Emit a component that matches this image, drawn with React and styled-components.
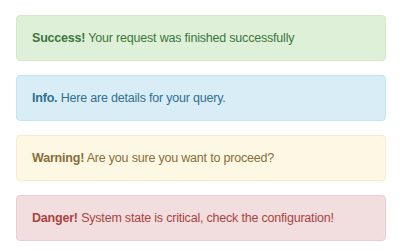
import React from "react";
import styled, { createGlobalStyle } from "styled-components";

const Global = createGlobalStyle`
  html, body { margin: 0; padding: 0; background: #fff; }
  body { font-family: "Liberation Sans", Arial, sans-serif; }
`;

const palette = {
  success: { bg: "#dff0d8", border: "#d6e9c6", color: "#3c763d" },
  info: { bg: "#d9edf7", border: "#bce8f1", color: "#31708f" },
  warning: { bg: "#fcf8e3", border: "#faebcc", color: "#8a6d3b" },
  danger: { bg: "#f2dede", border: "#ebccd1", color: "#a94442" },
};

const Stack = styled.div`
  display: flex;
  flex-direction: column;
  gap: 14px;
  width: 370px;
  padding: 15px 0 0 16px;
`;

const Alert = styled.div`
  box-sizing: border-box;
  height: 46px;
  padding: 12px 15px;
  border: 1px solid ${(p) => palette[p.$kind].border};
  border-radius: 4px;
  background: ${(p) => palette[p.$kind].bg};
  color: ${(p) => palette[p.$kind].color};
  font-size: 12.5px;
  letter-spacing: -0.2px;
  line-height: 20px;
`;

const Strong = styled.strong`
  font-weight: bold;
`;

const alerts = [
  { kind: "success", title: "Success!", text: "Your request was finished successfully" },
  { kind: "info", title: "Info.", text: "Here are details for your query." },
  { kind: "warning", title: "Warning!", text: "Are you sure you want to proceed?" },
  { kind: "danger", title: "Danger!", text: "System state is critical, check the configuration!" },
];

export default function App() {
  return (
    <>
      <Global />
      <Stack>
        {alerts.map((a) => (
          <Alert key={a.kind} $kind={a.kind}>
            <Strong>{a.title}</Strong> {a.text}
          </Alert>
        ))}
      </Stack>
    </>
  );
}
